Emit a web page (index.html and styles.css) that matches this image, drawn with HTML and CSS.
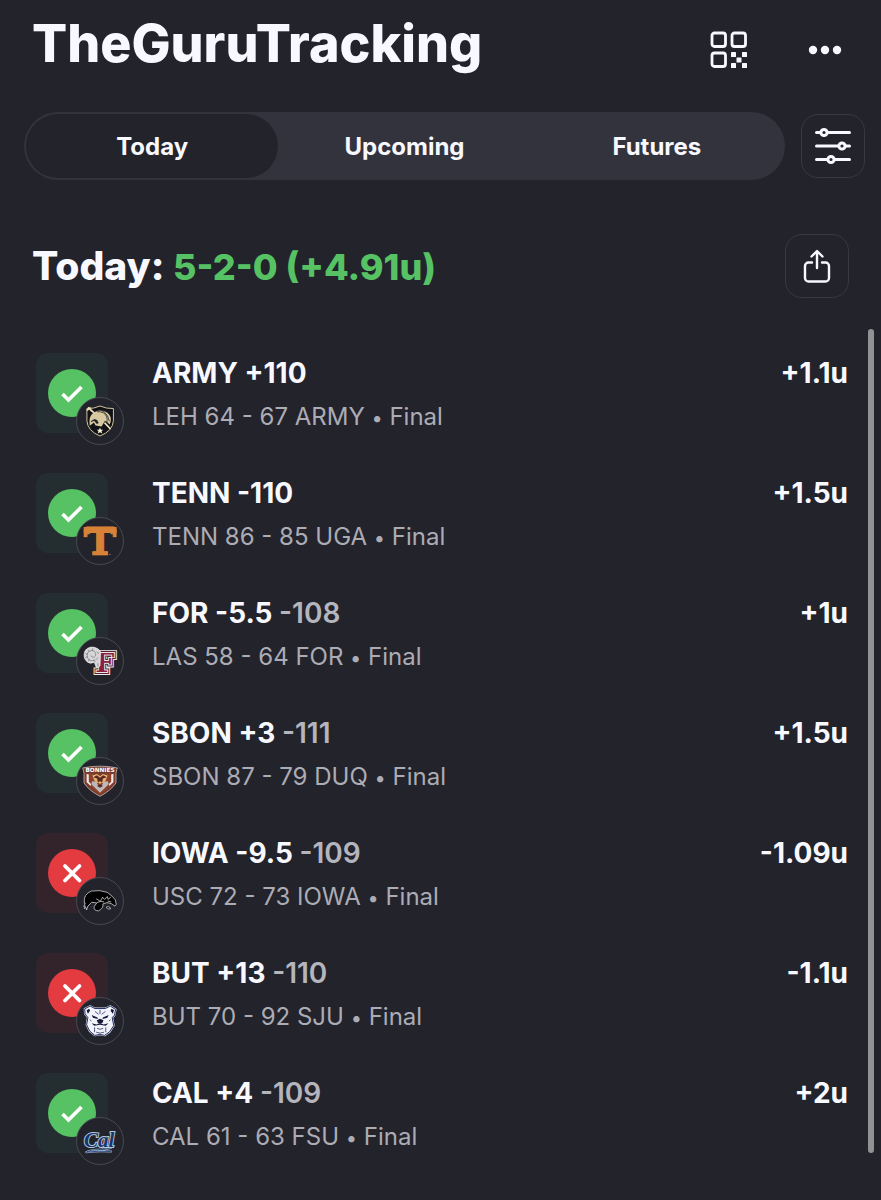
FILE: index.html
```html
<!DOCTYPE html>
<html lang="en">
<head>
<meta charset="utf-8">
<meta name="viewport" content="width=device-width, initial-scale=1">
<title>TheGuruTracking</title>
<link rel="stylesheet" href="styles.css">
</head>
<body>
<svg class="sprite" aria-hidden="true">
  <symbol id="win" viewBox="0 0 48 48"><circle cx="24" cy="24" r="24" fill="#56c264"/><path d="M14.500 25l6 6L33.500 18" fill="none" stroke="#fff" stroke-width="3.600"/></symbol>
  <symbol id="loss" viewBox="0 0 48 48"><circle cx="24" cy="24" r="24" fill="#e33b40"/><path d="M17 17l14.500 14.500M31.500 17L17 31.500" fill="none" stroke="#fff" stroke-width="3.800" stroke-linecap="round"/></symbol>
</svg>
<div class="app">
  <header class="header">
    <h1 class="title">TheGuruTracking</h1>
    <div class="header-actions">
      <button class="icon-button" type="button" aria-label="QR code">
        <svg width="38" height="38" viewBox="0 0 38 38" fill="none" stroke="#f8f8ff" stroke-width="2.800"><rect x="2" y="2" width="13.500" height="13.500" rx="2.500"/><rect x="22" y="2" width="13.500" height="13.500" rx="2.500"/><rect x="2" y="22" width="13.500" height="13.500" rx="2.500"/><g fill="#f8f8ff" stroke="none"><rect x="21" y="21" width="5" height="5" rx=".6"/><rect x="32" y="21" width="5" height="5" rx=".6"/><rect x="26.500" y="26.500" width="5" height="5" rx=".6"/><rect x="21" y="32" width="5" height="5" rx=".6"/><rect x="32" y="32" width="5" height="5" rx=".6"/></g></svg>
      </button>
      <button class="icon-button" type="button" aria-label="More options">
        <svg width="34" height="10" viewBox="0 0 34 10" fill="#f8f8ff"><circle cx="5" cy="5" r="4.200"/><circle cx="17" cy="5" r="4.200"/><circle cx="29" cy="5" r="4.200"/></svg>
      </button>
    </div>
  </header>

  <div class="toolbar">
    <nav class="tabs" aria-label="Period">
      <button class="tab tab-active" type="button">Today</button>
      <button class="tab" type="button">Upcoming</button>
      <button class="tab" type="button">Futures</button>
    </nav>
    <button class="square-button" type="button" aria-label="Filters">
      <svg width="38" height="38" viewBox="0 0 38 38" fill="#23232c" stroke="#f8f8ff" stroke-width="3" stroke-linecap="round"><path d="M2.500 5.500h33M2.500 19h33M2.500 32.500h33"/><circle cx="10" cy="5.500" r="3.100"/><circle cx="28" cy="19" r="3.100"/><circle cx="17" cy="32.500" r="3.100"/></svg>
    </button>
  </div>

  <div class="summary">
    <h2 class="summary-title">Today: <span class="summary-record">5-2-0 (+4.91u)</span></h2>
    <button class="square-button" type="button" aria-label="Share">
      <svg width="28" height="34" viewBox="0 0 28 34" fill="none" stroke="#f8f8ff" stroke-width="2.400" stroke-linecap="round" stroke-linejoin="round"><path d="M9 13.500H5.500a3.500 3.500 0 0 0-3.500 3.500v12a3.500 3.500 0 0 0 3.500 3.500h17a3.500 3.500 0 0 0 3.500-3.500V17a3.500 3.500 0 0 0-3.500-3.500H19M14 19V2.500M8.500 7.500L14 2l5.500 5.500"/></svg>
    </button>
  </div>

  <main class="feed">
    <ul class="bets">
      <li class="bet">
        <div class="status status-win">
          <svg class="result" role="img" aria-label="Won"><use href="#win"/></svg>
          <svg class="badge" viewBox="168 169 144 144" aria-hidden="true"><path d="M199 202Q221 203 240 194Q260 203 282 202V240Q280 272 240 288Q201 272 199 240Z" fill="#111116" stroke="#d9c9a0" stroke-width="3"/><path d="M203 198l12 13M199 208l12-9M254 246l19 20M209 204l14 13" stroke="#eee0b8" stroke-width="5"/><path d="M207 247Q205 222 224 213Q249 201 268 220Q279 234 270 252Q262 242 255 241L245 258L226 255L221 246L208 256Z" fill="#d9c9a0"/><path d="M231 212Q254 210 261 228Q264 237 261 246M242 207Q264 214 269 242" fill="none" stroke="#23232c" stroke-width="2.500"/><path d="M212 241l11-6 8 3 5 9-6 3-9-10-8 5z" fill="#23232c"/><path d="M240 261l3 7h7l-5 5 2 7-7-4-7 4 2-7-5-5h7z" fill="#f4edda"/></svg>
        </div>
        <div class="details"><h3 class="pick">ARMY +110</h3><p class="score">LEH 64 - 67 ARMY <span class="dot">•</span> Final</p></div>
        <strong class="units">+1.1u</strong>
      </li>
      <li class="bet">
        <div class="status status-win">
          <svg class="result" role="img" aria-label="Won"><use href="#win"/></svg>
          <svg class="badge" viewBox="168 171 144 144" aria-hidden="true"><g fill="#d78236"><rect x="189" y="199" width="103" height="19"/><rect x="189" y="205" width="12" height="26"/><rect x="280" y="205" width="12" height="26"/><rect x="216" y="276" width="49" height="12"/></g><text class="logo-tenn" x="240" y="285" text-anchor="middle">T</text><circle cx="271" cy="285" r="2" fill="#d78236"/></svg>
        </div>
        <div class="details"><h3 class="pick">TENN -110</h3><p class="score">TENN 86 - 85 UGA <span class="dot">•</span> Final</p></div>
        <strong class="units">+1.5u</strong>
      </li>
      <li class="bet">
        <div class="status status-win">
          <svg class="result" role="img" aria-label="Won"><use href="#win"/></svg>
          <svg class="badge" viewBox="168 171 144 144" aria-hidden="true"><text class="logo-for logo-for-edge" x="225" y="276">F</text><text class="logo-for logo-for-line" x="225" y="276">F</text><text class="logo-for logo-for-rim" x="225" y="276">F</text><text class="logo-for" x="225" y="276">F</text><path d="M232 204Q208 192 193 211Q185 232 199 245Q209 254 222 247L228 262Q235 267 240 258L242 216Q239 207 232 204Z" fill="#d6d6d8" stroke="#f4f4f5" stroke-width="2"/><path d="M225 239Q206 249 200 230Q198 211 215 210Q230 214 226 227Q219 236 211 226M194 220l7 2M194 232l8-3M203 244l4-7M203 208l4 6M217 203l0 8M230 214l7 6M228 239l6-7M233 250l1 10M218 240l8 5" fill="none" stroke="#6d6d74" stroke-width="2"/></svg>
        </div>
        <div class="details"><h3 class="pick">FOR -5.5 <span class="odds">-108</span></h3><p class="score">LAS 58 - 64 FOR <span class="dot">•</span> Final</p></div>
        <strong class="units">+1u</strong>
      </li>
      <li class="bet">
        <div class="status status-win">
          <svg class="result" role="img" aria-label="Won"><use href="#win"/></svg>
          <svg class="badge" viewBox="168 171 144 144" aria-hidden="true"><path d="M186 202Q240 191 294 202L290 219V249Q275 272 240 291Q204 272 190 249V219Z" fill="#783b2b" stroke="#e8e0dc" stroke-width="2"/><path d="M197 223L213 217L223 225H257L267 217L284 223V244Q270 267 240 285Q211 268 197 244Z" fill="#8b412b"/><path d="M198 220l7 3v22l7 7-1 7-13-12zM282 220l-7 3v22l-7 7 1 7 13-12z" fill="#eee6e2"/><path d="M215 244l14 1 6 14h10l6-14 14-1 2 9-27 27-27-27z" fill="#bdb9ba"/><path d="M216 226l15-5 9 7 9-7 15 5-7 17-7 7-6-2-4 5h-1l-3-5-6 2-7-7z" fill="#e4b272"/><path d="M219 231l12 4 2 12 7-3 7 3 2-12 12-4-11-6-10 8-10-8zM231 259l9 5 9-5-5-4h-8z" fill="#5a2923"/><text class="logo-bon" x="240" y="216" text-anchor="middle">BONNIES</text></svg>
        </div>
        <div class="details"><h3 class="pick">SBON +3 <span class="odds">-111</span></h3><p class="score">SBON 87 - 79 DUQ <span class="dot">•</span> Final</p></div>
        <strong class="units">+1.5u</strong>
      </li>
      <li class="bet">
        <div class="status status-loss">
          <svg class="result" role="img" aria-label="Lost"><use href="#loss"/></svg>
          <svg class="badge" viewBox="168 171 144 144" aria-hidden="true"><g fill="#000" stroke="#d5d5d8" stroke-width="2.400" stroke-linejoin="round"><path d="M191 250Q187 222 213 212Q240 207 263 216L278 228Q291 238 291 253L287 259L275 251L262 248L249 252Q252 266 235 274Q219 273 222 260L230 249L214 247L202 259L198 271L196 263L191 267L194 258L189 260L194 250Z"/><path d="M259 263q6-5 12 0l2 5q-10 2-14-5z"/><path d="M228 236l13 8 7-13 6 7 9-9 2 9 9-7M231 248q12-7 22-2M264 243l11 3" fill="none"/></g></svg>
        </div>
        <div class="details"><h3 class="pick">IOWA -9.5 <span class="odds">-109</span></h3><p class="score">USC 72 - 73 IOWA <span class="dot">•</span> Final</p></div>
        <strong class="units">-1.09u</strong>
      </li>
      <li class="bet">
        <div class="status status-loss">
          <svg class="result" role="img" aria-label="Lost"><use href="#loss"/></svg>
          <svg class="badge" viewBox="168 171 144 144" aria-hidden="true"><path d="M192 205L209 196L224 204H257L272 196L289 207L285 226L278 232L283 257L270 277L254 288L239 285L224 288L208 275L198 255L202 232L193 221Z" fill="#f2f2fa" stroke="#e3e4f2" stroke-width="6" stroke-linejoin="round"/><path d="M192 205L209 196L224 204H257L272 196L289 207L285 226L278 232L283 257L270 277L254 288L239 285L224 288L208 275L198 255L202 232L193 221Z" fill="#f2f2fa" stroke="#17275b" stroke-width="3" stroke-linejoin="round"/><path d="M198 209l8-4 3 6-7 9zM284 209l-8-4-3 6 7 9zM214 224l18 8 1 5-15-4zM267 224l-18 8-1 5 15-4zM230 241l10-5 11 5-4 9h-13zM214 250l15 4 11-4 12 4 14-4-8 8-18-3-18 3z" fill="#161a38"/><path d="M224 213l12 9M257 213l-12 9M223 263v15M258 263v15M228 278q12 6 25 0M240 208v13M208 239l5 4M273 239l-5 4M231 266q9 6 19 0" fill="none" stroke="#30365e" stroke-width="2.500"/></svg>
        </div>
        <div class="details"><h3 class="pick">BUT +13 <span class="odds">-110</span></h3><p class="score">BUT 70 - 92 SJU <span class="dot">•</span> Final</p></div>
        <strong class="units">-1.1u</strong>
      </li>
      <li class="bet">
        <div class="status status-win">
          <svg class="result" role="img" aria-label="Won"><use href="#win"/></svg>
          <svg class="badge" viewBox="168 171 144 144" aria-hidden="true"><g fill="none" stroke-linecap="round" stroke-linejoin="round"><path d="M283 258Q271 271 235 270Q212 269 197 278Q236 273 275 276" stroke="#a9bdd6" stroke-width="6"/><path d="M283 258Q271 271 235 270Q212 269 197 278Q236 273 275 276" stroke="#17366d" stroke-width="2.500"/></g><text class="logo-cal" x="190" y="263">Cal</text></svg>
        </div>
        <div class="details"><h3 class="pick">CAL +4 <span class="odds">-109</span></h3><p class="score">CAL 61 - 63 FSU <span class="dot">•</span> Final</p></div>
        <strong class="units">+2u</strong>
      </li>
    </ul>
    <div class="scroll-thumb"></div>
  </main>
</div>
</body>
</html>
```
FILE: styles.css
```css
* {
  box-sizing: border-box;
}

body {
  margin: 0;
  min-height: 100vh;
  background: #23232c;
  color: #f8f8ff;
  font-family: Inter, "Liberation Sans", sans-serif;
}

h1, h2, h3, p, ul {
  margin: 0;
  padding: 0;
}

button {
  padding: 0;
  border: 0;
  background: none;
  color: inherit;
  font: inherit;
  cursor: pointer;
}

svg {
  display: block;
}

.sprite {
  display: none;
}

.header {
  display: flex;
  align-items: center;
  justify-content: space-between;
  height: 96px;
  padding: 0 39px 8px 32px;
}

.title {
  font-size: 52px;
  line-height: 64px;
  font-weight: 800;
}

.header-actions {
  display: flex;
  align-items: center;
  gap: 60px;
  padding-top: 11px;
}

.toolbar {
  display: flex;
  align-items: center;
  gap: 16px;
  padding: 16px 16px 0 24px;
}

.tabs {
  display: flex;
  flex: 1;
  height: 68px;
  padding: 2px;
  border-radius: 34px;
  background: #33333d;
}

.tab {
  flex: 1;
  border-radius: 32px;
  font-size: 24px;
  font-weight: 700;
}

.tab-active {
  background: #23232c;
}

.square-button {
  display: grid;
  place-items: center;
  flex: none;
  width: 64px;
  height: 64px;
  border: 1px solid #383842;
  border-radius: 17px;
}

.summary {
  display: flex;
  align-items: center;
  justify-content: space-between;
  padding: 54px 32px 0 32px;
}

.summary-title {
  font-size: 39px;
  line-height: 48px;
  font-weight: 800;
}

.summary-record {
  color: #56c264;
  font-size: 36px;
}

.feed {
  display: flex;
  gap: 20px;
  padding: 31px 7px 47px 36px;
}

.bets {
  flex: 1;
  display: grid;
  gap: 40px;
  padding-top: 24px;
  list-style: none;
}

.bet {
  display: flex;
  gap: 44px;
  height: 80px;
}

.status {
  position: relative;
  display: grid;
  place-items: center;
  flex: none;
  width: 72px;
  height: 80px;
  border-radius: 12px;
}

.status-win {
  background: #242e30;
}

.status-loss {
  background: #33232b;
}

.result {
  width: 48px;
  height: 48px;
}

.badge {
  position: absolute;
  right: -16px;
  bottom: -12px;
  width: 48px;
  height: 48px;
  border: 1px solid #48484f;
  border-radius: 50%;
  background: #23232c;
}

.details {
  flex: 1;
}

.pick,
.units {
  font-size: 28px;
  line-height: 40px;
  font-weight: 700;
}

.odds {
  color: #b5b5bd;
  font-weight: 600;
}

.score {
  padding-top: 8px;
  color: #acacb5;
  font-size: 24px;
  line-height: 32px;
}

.dot {
  font-size: 20px;
}

.scroll-thumb {
  width: 6px;
  border-radius: 3px;
  background: #929295;
}

.logo-tenn {
  fill: #d78236;
  stroke: #d78236;
  stroke-width: 3px;
  font: 700 116px "DejaVu Serif", serif;
}

.logo-for {
  fill: #8b1f3d;
  font: 700 84px "DejaVu Serif", serif;
}

.logo-for-edge {
  stroke: #e8e8eb;
  stroke-width: 18px;
}

.logo-for-line {
  stroke: #5c1d32;
  stroke-width: 12px;
}

.logo-for-rim {
  stroke: #e8e8eb;
  stroke-width: 6px;
}

.logo-bon {
  fill: #fff;
  font: 700 18px "DejaVu Sans", sans-serif;
}

.logo-cal {
  fill: #17366d;
  stroke: #b5c6dc;
  stroke-width: 6px;
  paint-order: stroke;
  font: italic 700 66px "Liberation Serif", serif;
}
```
